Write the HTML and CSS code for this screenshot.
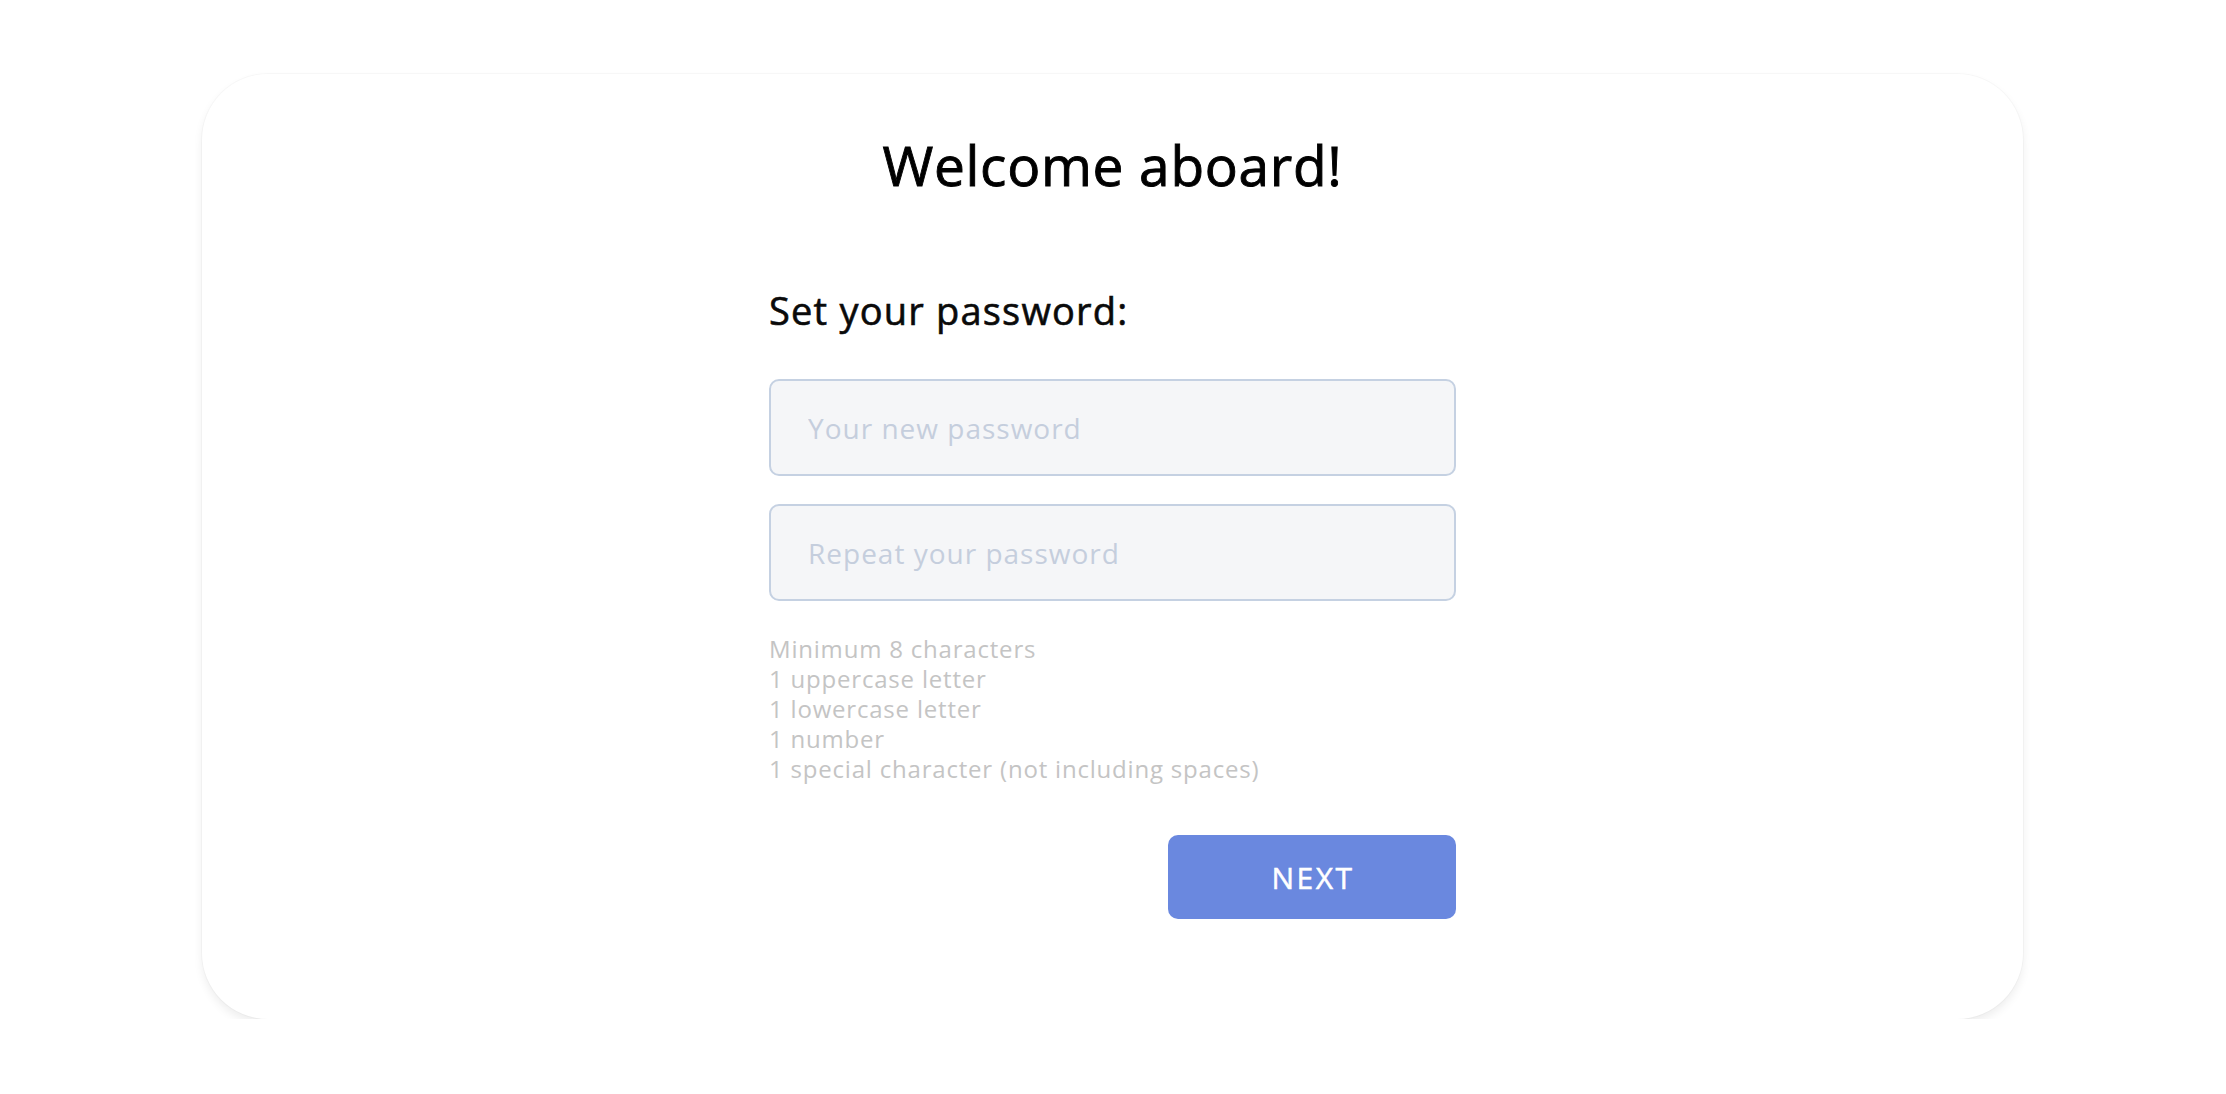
FILE: index.html
```html
<!DOCTYPE html>
<html lang="en">
<head>
<meta charset="utf-8">
<title>Welcome aboard!</title>
<link rel="stylesheet" href="styles.css">
</head>
<body>
<main class="page">
  <section class="card">
    <h1 class="title">Welcome aboard!</h1>
    <form class="form">
      <h2 class="subtitle">Set your password:</h2>
      <div class="fields">
        <input class="field" type="password" placeholder="Your new password">
        <input class="field" type="password" placeholder="Repeat your password">
      </div>
      <ul class="rules">
        <li>Minimum 8 characters</li>
        <li>1 uppercase letter</li>
        <li>1 lowercase letter</li>
        <li>1 number</li>
        <li>1 special character (not including spaces)</li>
      </ul>
      <div class="actions">
        <button class="next" type="button">NEXT</button>
      </div>
    </form>
  </section>
</main>
</body>
</html>
```

FILE: styles.css
```css
* {
  box-sizing: border-box;
}

html, body {
  margin: 0;
  padding: 0;
  background: #ffffff;
}

body {
  font-family: "Open Sans", "Noto Sans", sans-serif;
  color: #000;
}

.page {
  padding-top: 74px;
  display: flex;
  justify-content: center;
}

.card {
  width: 1821px;
  height: 945px;
  margin-left: -1px;
  background: #fff;
  border-radius: 66px;
  box-shadow: 0 0 0 1px rgba(0, 0, 0, 0.025), 0 5px 10px rgba(0, 0, 0, 0.07);
  padding-top: 58px;
  display: flex;
  flex-direction: column;
  align-items: center;
}

.title {
  margin: 0;
  font-size: 55px;
  line-height: 66px;
  font-weight: 400;
  letter-spacing: 0.7px;
  -webkit-text-stroke: 0.9px #000;
  color: #000;
}

.form {
  width: 687px;
  margin-top: 89px;
  display: flex;
  flex-direction: column;
}

.subtitle {
  margin: 0;
  font-size: 38px;
  line-height: 46px;
  font-weight: 400;
  letter-spacing: 1.2px;
  -webkit-text-stroke: 0.6px #0a0a0a;
  color: #0a0a0a;
}

.fields {
  margin-top: 46px;
  display: flex;
  flex-direction: column;
  gap: 28px;
}

.field {
  width: 100%;
  height: 97px;
  border: 2px solid #c5d1e2;
  border-radius: 10px;
  background: #f5f6f8;
  padding: 0 0 0 37px;
  font-family: "Open Sans", "Noto Sans", sans-serif;
  font-size: 28px;
  letter-spacing: 1px;
  color: #333;
  outline: none;
}

.field::placeholder {
  color: #c5cedd;
  opacity: 1;
}

.rules {
  list-style: none;
  margin: 33px 0 0;
  padding: 0;
  font-size: 24px;
  line-height: 30px;
  letter-spacing: 0.8px;
  color: #c4c4c4;
}

.actions {
  margin-top: 51px;
  display: flex;
  justify-content: flex-end;
}

.next {
  width: 288px;
  height: 84px;
  border: none;
  border-radius: 10px;
  background: #6a88df;
  color: #fff;
  font-family: "Open Sans", "Noto Sans", sans-serif;
  font-size: 30px;
  font-weight: 400;
  letter-spacing: 2.5px;
  -webkit-text-stroke: 0.5px #fff;
  padding: 0 0 0 2px;
  cursor: pointer;
}
```
